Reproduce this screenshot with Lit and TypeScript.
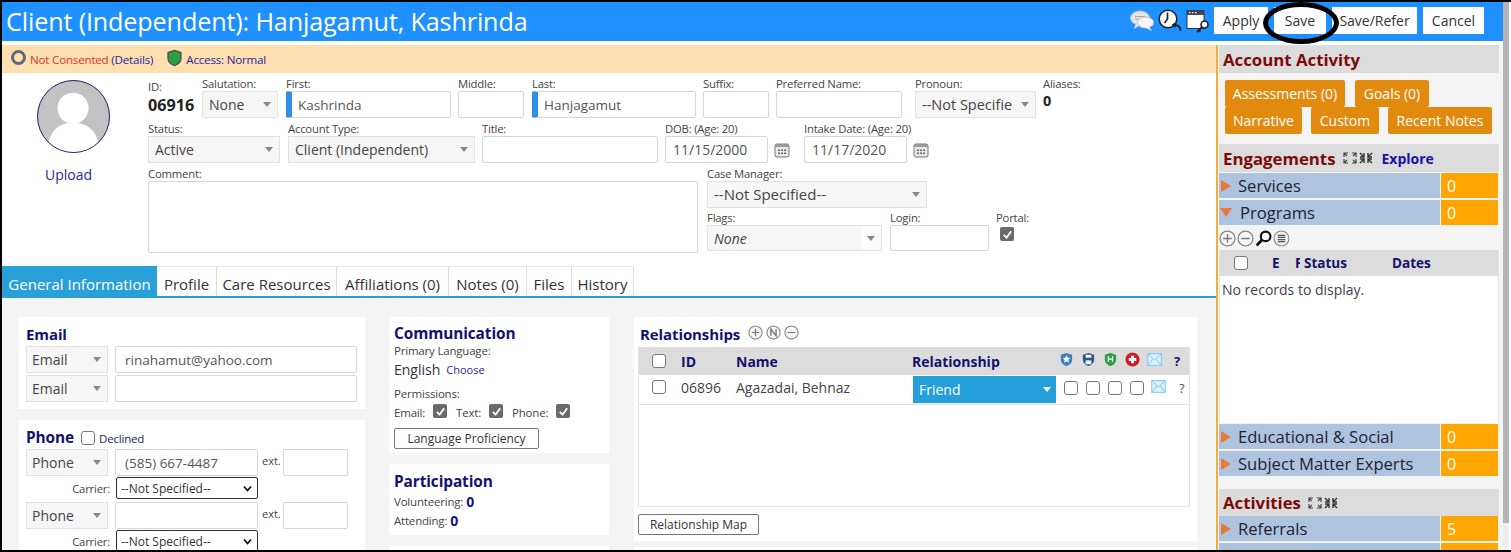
import { LitElement, html, css, svg } from "lit";
import { customElement } from "lit/decorators.js";

const plus = (k: string) => html`<svg class="ci" viewBox="0 0 16 16"><circle cx="8" cy="8" r="7" fill="#f6f6f6" stroke="#888" stroke-width="1.2"/>${k === "+" ? svg`<path d="M4 8h8M8 4v8" stroke="#777" stroke-width="1.3"/>` : k === "-" ? svg`<path d="M4 8h8" stroke="#777" stroke-width="1.3"/>` : svg`<path d="M5.2 11.5v-7l5.6 7v-7" fill="none" stroke="#777" stroke-width="1.5"/>`}</svg>`;
const expand = html`<svg class="ex" viewBox="0 0 14 12"><path d="M1 5V1h4M1 1l3 3M13 5V1H9M13 1l-3 3M1 7v4h4M1 11l3-3M13 7v4H9M13 11l-3-3" fill="none" stroke="#444" stroke-width="1.2"/></svg>`;
const collapse = html`<svg class="ex col" viewBox="0 0 14 12"><path d="M5 1v4H1M5 5L1 1M9 1v4h4M9 5l4-4M5 11V7H1M5 7l-4 4M9 11V7h4M9 7l4 4" fill="none" stroke="#333" stroke-width="1.4"/></svg>`;
const cal = html`<svg class="cal" viewBox="0 0 16 16"><rect x="1" y="2" width="14" height="13" rx="2" fill="#e8e8e8" stroke="#777"/><rect x="1" y="2" width="14" height="3" fill="#999"/><path d="M4 7.5h2v1.6H4zM7 7.5h2v1.6H7zM10 7.5h2v1.6h-2zM4 10.5h2v1.6H4zM7 10.5h2v1.6H7zM10 10.5h2v1.6h-2z" fill="#666"/></svg>`;
const mail = html`<svg class="mail" viewBox="0 0 16 14"><rect x=".7" y=".7" width="14.6" height="12.6" fill="#d9effc" stroke="#7cc6ee"/><path d="M1 1l7 6.5L15 1M1 13l5-6.5M15 13l-5-6.5" fill="none" stroke="#7cc6ee"/></svg>`;
const shield = (c: string, inner: unknown) => html`<svg class="sh" viewBox="0 0 16 16"><path d="M8 1l6 2v5c0 4-3 6-6 7-3-1-6-3-6-7V3z" fill="${c}"/>${inner}</svg>`;

function sel(text: string, cls: string) {
  return html`<div class="sel ${cls}"><span>${text}</span><i class="caret"></i></div>`;
}
function field(label: string, inner: unknown, cls: string) {
  return html`<div class="field ${cls}"><label>${label}</label>${inner}</div>`;
}

@customElement("app-root")
export class AppRoot extends LitElement {
  static styles = css`
    :host { display: block; width: 1511px; height: 552px; overflow: hidden; position: relative; background: #000; font-family: "Open Sans", "Noto Sans", sans-serif; color: #333; box-sizing: border-box; }
    * { box-sizing: border-box; }
    .frame { position: absolute; inset: 2px 0 2px 2px; display: flex; flex-direction: column; background: #fff; overflow: hidden; }
    .frameInner { width: 1501px; height: 548px; display: flex; flex-direction: column; overflow: hidden; background: #fff; }
    .head { height: 39px; background: #1e90ff; display: flex; align-items: center; padding-left: 4px; flex: none; }
    .head h1 { margin: 0; font-weight: 400; color: #fff; font-size: 25.2px; letter-spacing: -0.15px; flex: 1; white-space: nowrap; position: relative; top: -1px; }
    .hicons { display: flex; gap: 4px; align-items: center; margin-right: 4px; position: relative; top: -1px; }
    .hicons svg { width: 24px; height: 24px; display: block; }
    .hbtns { display: flex; gap: 6px; padding-right: 19px; position: relative; top: -1px; }
    .hbtn { height: 27px; background: #fff; color: #333; font-size: 14px; display: flex; align-items: center; justify-content: center; }
    .body { display: flex; flex: 1; min-height: 0; margin-top: 4px; }
    .main { width: 1214px; flex: none; display: flex; flex-direction: column; min-height: 0; overflow: hidden; }
    .banner { height: 28px; background: #fddfb0; display: flex; align-items: center; padding: 1px 0 0 9px; font-size: 11.6px; flex: none; letter-spacing: -0.2px; }
    .ring { width: 15px; height: 15px; border-radius: 50%; border: 3px solid #5d6b75; margin-right: 4px; position: relative; top: -2px; }
    .red { color: #e0342a; }
    .nav { color: #2a1fa0; }
    .banner .sh { width: 17px; height: 18px; margin: 0 3px 0 13px; position: relative; top: -2px; }
    .top { display: flex; height: 193px; flex: none; }
    .avatarCol { width: 146px; flex: none; display: flex; flex-direction: column; align-items: center; padding: 7px 4px 0 0; }
    .avatar { width: 73px; height: 73px; border-radius: 50%; border: 1px solid #1a1a6e; background: #c2c2c4; overflow: hidden; display: block; }
    .upload { color: #2a2a9a; font-size: 14px; margin: 12px 9px 0 0; }
    .form { flex: 1; display: flex; flex-direction: column; padding-top: 4px; }
    .row { display: flex; align-items: flex-start; }
    .field { display: flex; flex-direction: column; flex: none; }
    .field label { font-size: 11.3px; line-height: 14px; height: 14px; color: #444; white-space: nowrap; letter-spacing: -0.2px; }
    .inp { height: 27px; border: 1px solid #d6d6d6; border-radius: 2px; background: #fff; font-size: 13.5px; color: #555; display: flex; align-items: center; padding-left: 7px; white-space: nowrap; overflow: hidden; }
    .req { border-left: 6px solid #2f8fe8; padding-left: 6px; }
    .sel { height: 27px; background: #f6f6f6; border: 1px solid #e2e2e2; font-size: 14px; color: #444; display: flex; align-items: center; padding-left: 6px; position: relative; white-space: nowrap; overflow: hidden; }
    .caret { position: absolute; right: 6px; top: 10px; width: 0; height: 0; border-left: 4.5px solid transparent; border-right: 4.5px solid transparent; border-top: 5px solid #888; }
    .r1 { height: 45px; }
    .r2 { height: 45px; }
    .w-id { width: 54px; }
    .idv { font-weight: 700; font-size: 16.2px; color: #222; line-height: 20px; margin-top: 1px; }
    .idl { margin-top: 3px; }
    .w-sal { width: 76px; margin-right: 8px; }
    .w-first { width: 165px; margin-right: 7px; }
    .w-mid { width: 66px; margin-right: 8px; }
    .w-last { width: 164px; margin-right: 7px; }
    .w-suf { width: 66px; margin-right: 7px; }
    .w-pref { width: 126px; margin-right: 13px; }
    .w-pron { width: 121px; margin-right: 7px; }
    .w-pron .sel { font-size: 14.5px; }
    .w-al { width: 60px; }
    .alv { font-weight: 700; font-size: 14.5px; color: #222; line-height: 20px; }
    .w-stat { width: 132px; margin-right: 8px; }
    .w-acct { width: 187px; margin-right: 7px; }
    .w-title { width: 176px; margin-right: 7px; }
    .w-dob { width: 139px; }
    .w-int { width: 140px; }
    .dateRow { display: flex; align-items: center; }
    .dob { width: 103px; font-size: 14px; }
    .cal { width: 16px; height: 16px; margin-left: 6px; display: block; }
    .r3 { display: flex; }
    .w-com { width: 550px; margin-right: 9px; }
    .ta { height: 72px; border: 1px solid #d6d6d6; border-radius: 2px; }
    .rc { width: 330px; display: flex; flex-direction: column; }
    .w-case { width: 220px; height: 44px; }
    .w-case .sel { font-size: 15px; padding-bottom: 2px; }
    .flagRow { display: flex; }
    .w-fl { width: 175px; margin-right: 8px; }
    .w-fl .sel { font-style: italic; height: 26px; background: linear-gradient(to right, #f6f6f6 153px, #fbfbfb 153px); }
    .w-lg { width: 99px; margin-right: 7px; }
    .w-lg .inp { height: 26px; }
    .w-po { width: 40px; }
    .chk { width: 14px; height: 14px; background: #6b6b6b; border-radius: 2px; display: flex; align-items: center; justify-content: center; flex: none; }
    .chk svg { width: 11px; height: 11px; display: block; }
    .w-po .chk { margin: 2px 0 0 4px; }
    .tabs { display: flex; height: 32px; border-bottom: 2px solid #2aa0d8; flex: none; }
    .tab { height: 30px; display: flex; align-items: center; justify-content: center; font-size: 15px; color: #333; border-right: 1px solid #ddd; border-top: 1px solid #e6e6e6; white-space: nowrap; padding-top: 4px; }
    .tab.on { background: #2aa0d8; color: #fff; border: none; padding-top: 6px; }
    .lower { flex: 1; background: #f4f4f4; display: flex; padding: 19px 0 0 17px; min-height: 0; overflow: hidden; }
    .colA { width: 346px; margin-right: 24px; flex: none; display: flex; flex-direction: column; gap: 11px; }
    .colB { width: 220px; margin-right: 25px; flex: none; display: flex; flex-direction: column; gap: 11px; }
    .colC { width: 563px; flex: none; display: flex; flex-direction: column; gap: 6px; }
    .card { background: #fff; flex: none; }
    .emailC { height: 92px; padding: 8px 8px 0 7px; }
    .emailC h3 { margin-bottom: 3px; font-size: 15px; }
    .phoneC { height: 140px; padding: 9px 8px 0 7px; }
    .filler { height: 20px; }
    h3 { margin: 0; font-size: 15.4px; line-height: 18px; font-weight: 700; color: #12126e; letter-spacing: -0.1px; }
    .cRow { display: flex; gap: 7px; margin-bottom: 2px; }
    .cRow .sel { width: 82px; padding-left: 5px; }
    .cRow .inp { height: 27px; }
    .mail1 { width: 242px; font-size: 13.5px; padding-left: 9px; }
    .ph { width: 143px; padding-left: 9px; font-size: 13.5px; }
    .extl { font-size: 11px; margin-left: -3px; color: #444; width: 14px; padding-top: 4px; white-space: nowrap; }
    .ext { width: 65px; }
    .phHead { display: flex; align-items: center; margin-bottom: 2px; }
    .phoneC .cRow { margin-bottom: 1px; }
    .decl { font-size: 11.5px; color: #222266; display: flex; align-items: center; margin-left: 7px; letter-spacing: -0.2px; }
    .box { width: 14px; height: 14px; border: 1px solid #777; border-radius: 3px; background: #fff; flex: none; display: block; }
    .decl .box { margin-right: 4px; }
    .carr { display: flex; align-items: center; margin: 0 0 3px; height: 22px; }
    .carr label { width: 90px; text-align: right; font-size: 11.3px; color: #444; padding-right: 6px; letter-spacing: -0.2px; }
    .ns { width: 142px; height: 22px; border: 1px solid #333; border-radius: 2px; font-size: 12px; color: #333; display: flex; align-items: center; padding-left: 4px; background: #fff; position: relative; }
    .ns svg { position: absolute; right: 5px; top: 7px; width: 9px; height: 7px; }
    .commC { height: 136px; padding: 8px 5px; }
    .sm { font-size: 11.5px; color: #444; letter-spacing: -0.2px; line-height: 14px; }
    .pl { margin-top: 1px; }
    .perml { margin-top: 7px; }
    .eng { display: flex; align-items: center; font-size: 14px; color: #333; height: 22px; }
    .eng a { font-size: 11px; color: #2a2a9a; margin-left: 6px; }
    .perm { display: flex; align-items: center; font-size: 11.5px; color: #444; margin-top: 3px; height: 16px; letter-spacing: -0.2px; }
    .perm .chk { margin: -2px 9px 0 8px; }
    .lp { margin-top: 8px; width: 145px; height: 21px; border: 1px solid #777; border-radius: 2px; font-size: 12px; display: flex; align-items: center; justify-content: center; color: #333; }
    .partC { height: 71px; padding: 9px 5px; }
    .partC h3 { margin-bottom: 1px; }
    .partC div.l { font-size: 11.5px; color: #444; height: 19px; display: flex; align-items: center; letter-spacing: -0.2px; }
    .partC b { color: #14147a; font-size: 14px; margin-left: 3px; }
    .relC { height: 224px; padding: 6px 4px; }
    .relH { display: flex; align-items: flex-start; height: 24px; padding: 2px 0 0 2px; gap: 3px; }
    .ci { width: 15px; height: 15px; display: block; }
    .relH h3 { margin-right: 5px; font-size: 15px; }
    .relBox { border: 1px solid #e2e2e2; height: 160px; width: 552px; border-top: none; }
    .rGrid { display: grid; grid-template-columns: 42px 55px 176px 146px 1fr; align-items: center; }
    .rh { height: 28px; background: #dcdcdc; font-weight: 700; font-size: 14px; color: #12126e; }
    .rr { height: 30px; border-bottom: 1px solid #e2e2e2; font-size: 14px; color: #444; }
    .rr > *, .rh > * { white-space: nowrap; }
    .rr > span { padding-bottom: 5px; }
    .rGrid .box { margin-left: 13px; }
    .rel { height: 27px; background: #249fda; color: #fff; font-size: 14px; display: flex; align-items: center; padding-left: 6px; width: 143px; position: relative; align-self: start; margin: 1px 0 0 1px; }
    .rel .caret { border-top-color: #fff; top: 11px; right: 5px; }
    .rIcons { display: flex; align-items: center; gap: 7px; padding-left: 1px; margin-top: -4px; }
    .rIcons .sh { width: 15px; height: 15px; display: block; }
    .mail { width: 15px; height: 13px; display: block; }
    .q { font-weight: 700; font-size: 13px; color: #12126e; margin: 3px 0 0 5px; }
    .rrIcons { display: flex; align-items: center; gap: 8px; padding-left: 6px; align-self: start; margin-top: 4px; }
    .rrIcons .box { margin: 0; }
    .rrIcons .mail { margin: -4px 0 0 -1px; }
    .rrIcons span { font-size: 13px; color: #555; margin-left: 5px; }
    .rm { margin-top: 7px; width: 121px; height: 21px; border: 1px solid #777; border-radius: 2px; font-size: 12px; display: flex; align-items: center; justify-content: center; color: #333; }
    .side { width: 287px; flex: none; border-left: 2px solid #eeb040; background: #f4f4f4; padding-left: 1px; display: flex; flex-direction: column; overflow: hidden; }
    .sideH { background: #dcdcdc; display: flex; align-items: center; font-weight: 700; color: #7c0a0a; font-size: 16.8px; white-space: nowrap; padding-left: 4px; width: 280px; flex: none; }
    .ex { width: 14px; height: 12px; display: block; margin-left: 7px; }
    .ex.col { margin-left: 2px; }
    .explore { font-size: 14px; color: #1414a8; font-weight: 700; margin-left: 9px; }
    .btns { padding: 7px 0 0 6px; height: 71px; flex: none; }
    .bl { display: flex; }
    .ob { background: #e28a0e; color: #fff; font-size: 14px; height: 27px; display: flex; align-items: center; justify-content: center; border-radius: 2px; white-space: nowrap; }
    .srow { display: flex; height: 25px; width: 279px; margin-bottom: 2px; flex: none; }
    .sname { flex: 1; background: #adc3de; font-size: 16.6px; color: #223; display: flex; align-items: center; white-space: nowrap; }
    .sval { width: 57px; margin-left: 1px; background: #ffa500; color: #fff; font-size: 16px; display: flex; align-items: center; padding-left: 6px; }
    .tri { width: 0; height: 0; border-top: 6px solid transparent; border-bottom: 6px solid transparent; border-left: 10px solid #e9793a; margin: 0 7px 0 2px; flex: none; }
    .triD { width: 0; height: 0; border-left: 6px solid transparent; border-right: 6px solid transparent; border-top: 9px solid #e9793a; margin: 0 8px 0 1px; flex: none; }
    .tools { display: flex; height: 23px; align-items: center; gap: 1px; flex: none; }
    .tools .ci { width: 17px; height: 17px; }
    .pTable { width: 280px; height: 173px; background: #fff; border-left: 1px solid #e4e4e4; border-right: 1px solid #e4e4e4; flex: none; margin-bottom: 1px; }
    .pH { height: 26px; background: #dcdcdc; display: flex; align-items: center; font-weight: 700; font-size: 13.5px; color: #12126e; white-space: nowrap; }
    .pH .box { margin: 0 24px 0 14px; }
    .pE { width: 23px; }
    .pF { width: 5px; margin-right: 4px; overflow: hidden; }
    .pS { width: 88px; }
    .noRec { font-size: 14px; color: #444; padding: 4px 2px; }
    .gap1 { height: 1px; flex: none; }
    .gap11 { height: 11px; flex: none; }
    .scroll { position: absolute; right: 0; top: 2px; bottom: 2px; width: 8px; background: #fff; z-index: 2; }
    .track { width: 6px; height: 100%; background: #eeeeee; }
    .thumb { width: 6px; height: 521px; background: #b4b4b4; }
    .oval { position: absolute; left: 1263px; top: 2px; width: 76px; height: 42px; border: 5px solid #000; border-radius: 50%; pointer-events: none; z-index: 3; }
  `;

  render() {
    const check = html`<svg viewBox="0 0 12 12"><path d="M2 6.5l3 3 5-7" fill="none" stroke="#fff" stroke-width="2"/></svg>`;
    const chk = html`<span class="chk">${check}</span>`;
    const ob = (t: string, w: number, ml: number) => html`<div class="ob" style="width:${w}px;margin-left:${ml}px">${t}</div>`;
    const srow = (n: string, v: string, open = false) => html`<div class="srow"><div class="sname"><i class="${open ? "triD" : "tri"}"></i>${n}</div><div class="sval">${v}</div></div>`;
    const hb = (t: string, w: number) => html`<div class="hbtn" style="width:${w}px">${t}</div>`;
    const tab = (t: string, w: number, on = false) => html`<div class="tab ${on ? "on" : ""}" style="width:${w}px">${t}</div>`;
    const carrier = html`<div class="carr"><label>Carrier:</label><div class="ns">--Not Specified--<svg viewBox="0 0 9 7"><path d="M1 1.5l3.5 4 3.5-4" fill="none" stroke="#111" stroke-width="1.8"/></svg></div></div>`;
    return html`
      <div class="frame"><div class="frameInner">
        <div class="head">
          <h1>Client (Independent): Hanjagamut, Kashrinda</h1>
          <div class="hicons">
            <svg viewBox="0 0 24 24"><ellipse cx="10" cy="9" rx="9.5" ry="7" fill="#e4e4e4" stroke="#c4c4c4"/><path d="M5 7.5h10M5 10h9" stroke="#aaa" stroke-width="1.2"/><path d="M4 20l2-6 5 2z" fill="#e4e4e4"/><ellipse cx="15.5" cy="13.5" rx="8" ry="5.5" fill="#f6f6f6" stroke="#c4c4c4"/><path d="M19 18l3 4-7-3.5z" fill="#f6f6f6"/></svg>
            <svg viewBox="0 0 24 24"><circle cx="10" cy="10" r="8.8" fill="#fff" stroke="#222" stroke-width="1.6"/><path d="M9.5 3.5v6.5l-3 4" fill="none" stroke="#222" stroke-width="1.7"/><path d="M22.5 22c0-4-2.500-6-6-6" fill="none" stroke="#123" stroke-width="1.8"/><path d="M13.500 16l4-3v6z" fill="#123"/></svg>
            <svg viewBox="0 0 24 24"><rect x="1" y="1.500" width="17" height="18" fill="#fff" stroke="#334"/><rect x="1" y="1.500" width="17" height="4.500" fill="#445"/><path d="M3 3.700h1.500M6 3.700h1.500M9 3.700h1.500" stroke="#fff" stroke-width="1.200"/><circle cx="18.500" cy="15.500" r="3.500" fill="#fff" stroke="#223" stroke-width="1.600"/><path d="M16 18l-5 5M13 21l1.500 1.500" stroke="#223" stroke-width="1.800"/></svg>
          </div>
          <div class="hbtns">${hb("Apply", 54)}${hb("Save", 52)}${hb("Save/Refer", 85)}${hb("Cancel", 61)}</div>
        </div>
        <div class="body">
          <div class="main">
            <div class="banner"><i class="ring"></i><span class="red">Not Consented</span>&nbsp;<span class="nav">(Details)</span>${shield("#2e9e44", svg`<path d="M8 1l6 2v5c0 4-3 6-6 7-3-1-6-3-6-7V3z" fill="none" stroke="#4a5a50" stroke-width="1.5"/>`)}<span class="nav">Access: Normal</span></div>
            <div class="top">
              <div class="avatarCol">
                <svg class="avatar" viewBox="0 0 73 73"><circle cx="36" cy="28" r="16" fill="#fff"/><path d="M10 73c0-22 12-30 26-30s27 8 27 30z" fill="#fff"/></svg>
                <div class="upload">Upload</div>
              </div>
              <div class="form">
                <div class="row r1">
                  <div class="field w-id idl"><label>ID:</label><div class="idv">06916</div></div>
                  ${field("Salutation:", sel("None", ""), "w-sal")}
                  ${field("First:", html`<div class="inp req">Kashrinda</div>`, "w-first")}
                  ${field("Middle:", html`<div class="inp"></div>`, "w-mid")}
                  ${field("Last:", html`<div class="inp req">Hanjagamut</div>`, "w-last")}
                  ${field("Suffix:", html`<div class="inp"></div>`, "w-suf")}
                  ${field("Preferred Name:", html`<div class="inp"></div>`, "w-pref")}
                  ${field("Pronoun:", sel("--Not Specifie", ""), "w-pron")}
                  ${field("Aliases:", html`<div class="alv">0</div>`, "w-al")}
                </div>
                <div class="row r2">
                  ${field("Status:", sel("Active", ""), "w-stat")}
                  ${field("Account Type:", sel("Client (Independent)", ""), "w-acct")}
                  ${field("Title:", html`<div class="inp"></div>`, "w-title")}
                  ${field("DOB: (Age: 20)", html`<div class="dateRow"><div class="inp dob">11/15/2000</div>${cal}</div>`, "w-dob")}
                  ${field("Intake Date: (Age: 20)", html`<div class="dateRow"><div class="inp dob">11/17/2020</div>${cal}</div>`, "w-int")}
                </div>
                <div class="r3">
                  <div class="field w-com"><label>Comment:</label><div class="ta"></div></div>
                  <div class="rc">
                    ${field("Case Manager:", sel("--Not Specified--", ""), "w-case")}
                    <div class="flagRow">
                      ${field("Flags:", sel("None", ""), "w-fl")}
                      ${field("Login:", html`<div class="inp"></div>`, "w-lg")}
                      <div class="field w-po"><label>Portal:</label><span class="chk">${check}</span></div>
                    </div>
                  </div>
                </div>
              </div>
            </div>
            <div class="tabs">
              ${tab("General Information", 155, true)}${tab("Profile", 60)}${tab("Care Resources", 120)}${tab("Affiliations (0)", 112)}${tab("Notes (0)", 78)}${tab("Files", 45)}${tab("History", 62)}
            </div>
            <div class="lower">
              <div class="colA">
                <div class="card emailC">
                  <h3>Email</h3>
                  <div class="cRow">${sel("Email", "")}<div class="inp mail1">rinahamut@yahoo.com</div></div>
                  <div class="cRow">${sel("Email", "")}<div class="inp mail1"></div></div>
                </div>
                <div class="card phoneC">
                  <div class="phHead"><h3>Phone</h3><div class="decl"><i class="box"></i>Declined</div></div>
                  <div class="cRow">${sel("Phone", "")}<div class="inp ph">(585) 667-4487</div><span class="extl">ext.</span><div class="inp ext"></div></div>
                  ${carrier}
                  <div class="cRow">${sel("Phone", "")}<div class="inp ph"></div><span class="extl">ext.</span><div class="inp ext"></div></div>
                  ${carrier}
                </div>
              </div>
              <div class="colB">
                <div class="card commC">
                  <h3>Communication</h3>
                  <div class="sm pl">Primary Language:</div>
                  <div class="eng">English<a>Choose</a></div>
                  <div class="sm perml">Permissions:</div>
                  <div class="perm">Email:${chk}Text:${chk}Phone:${chk}</div>
                  <div class="lp">Language Proficiency</div>
                </div>
                <div class="card partC">
                  <h3>Participation</h3>
                  <div class="l">Volunteering:<b>0</b></div>
                  <div class="l">Attending:<b>0</b></div>
                </div>
                <div class="card filler"></div>
              </div>
              <div class="colC">
                <div class="card relC">
                  <div class="relH"><h3>Relationships</h3>${plus("+")}${plus("N")}${plus("-")}</div>
                  <div class="relBox">
                    <div class="rGrid rh">
                      <span><i class="box"></i></span><span>ID</span><span>Name</span><span>Relationship</span>
                      <div class="rIcons">
                        ${shield("#3c7ec2", svg`<path d="M8 3.500l1.300 2.600 2.700.4-2 2 .5 2.800L8 10l-2.500 1.300.5-2.800-2-2 2.700-.4z" fill="#fff"/>`)}
                        ${shield("#2a5a8a", svg`<rect x="5" y="3" width="6" height="3" fill="#fff"/><rect x="5" y="9" width="6" height="4" fill="#fff"/>`)}
                        ${shield("#2e9e44", svg`<path d="M5.800 4.500v6M10.200 4.500v6M5.800 7.500h4.400" stroke="#fff" stroke-width="1.400"/>`)}
                        <svg class="sh" viewBox="0 0 16 16"><circle cx="8" cy="8" r="7.500" fill="#c8202a"/><path d="M8 4v8M4 8h8" stroke="#fff" stroke-width="3"/></svg>
                        ${mail}<span class="q">?</span>
                      </div>
                    </div>
                    <div class="rGrid rr">
                      <span><i class="box"></i></span><span>06896</span><span>Agazadai, Behnaz</span>
                      <div class="rel">Friend<i class="caret"></i></div>
                      <div class="rrIcons"><i class="box"></i><i class="box"></i><i class="box"></i><i class="box"></i>${mail}<span>?</span></div>
                    </div>
                  </div>
                  <div class="rm">Relationship Map</div>
                </div>
                <div class="card filler"></div>
              </div>
            </div>
          </div>
          <div class="side">
            <div class="sideH" style="height:28px">Account Activity</div>
            <div class="btns">
              <div class="bl">${ob("Assessments (0)", 120, 0)}${ob("Goals (0)", 74, 10)}</div>
              <div class="bl">${ob("Narrative", 77, 0)}${ob("Custom", 68, 9)}${ob("Recent Notes", 104, 9)}</div>
            </div>
            <div class="sideH" style="height:28px">Engagements${expand}${collapse}<span class="explore">Explore</span></div>
            <div class="gap1"></div>
            ${srow("Services", "0")}
            ${srow("Programs", "0", true)}
            <div class="tools">${plus("+")}${plus("-")}<svg class="ci" viewBox="0 0 16 16"><circle cx="10" cy="6" r="4.500" fill="#fff" stroke="#111" stroke-width="2"/><path d="M6.500 9.500L1.500 14.500" stroke="#111" stroke-width="2.600"/></svg><svg class="ci" viewBox="0 0 16 16"><circle cx="8" cy="8" r="7" fill="#eee" stroke="#888"/><path d="M4.500 5h7M4.500 7h7M4.500 9h7M4.500 11h7" stroke="#555" stroke-width="1.100"/></svg></div>
            <div class="pTable">
              <div class="pH"><i class="box"></i><span class="pE">E</span><span class="pF">F</span><span class="pS">Status</span><span>Dates</span></div>
              <div class="noRec">No records to display.</div>
            </div>
            ${srow("Educational & Social", "0")}
            ${srow("Subject Matter Experts", "0")}
            <div class="gap11"></div>
            <div class="sideH" style="height:27px">Activities${expand}${collapse}</div>
            ${srow("Referrals", "5")}
            ${srow("Client Alerts", "")}
          </div>
        </div>
      </div></div>
      <div class="scroll"><div class="track"><div class="thumb"></div></div></div>
      <div class="oval"></div>
    `;
  }
}
